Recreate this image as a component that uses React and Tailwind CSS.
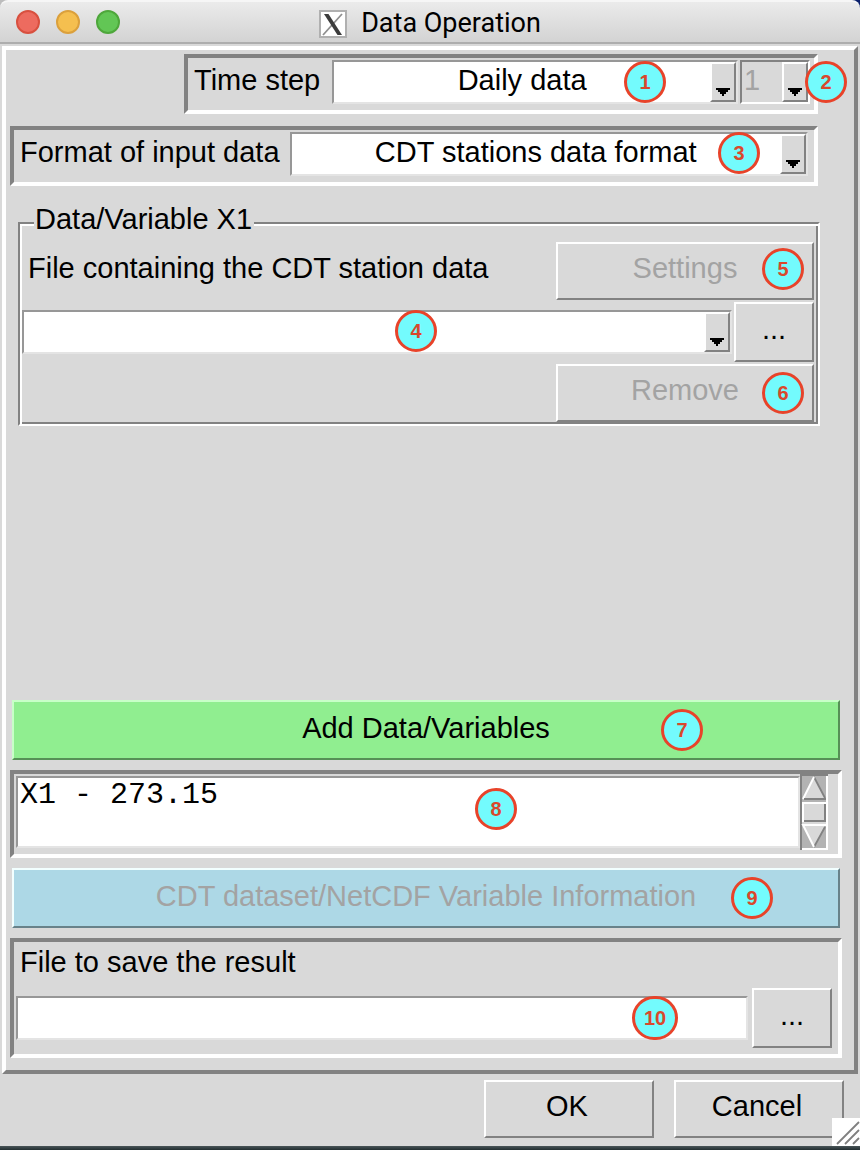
import React from "react";

const SUNKEN =
  "border-4 border-t-[#828282] border-l-[#828282] border-r-white border-b-white";
const FIELD =
  "border-2 border-t-[#979797] border-l-[#979797] border-r-[#e4e4e4] border-b-[#e4e4e4]";
const RAISED =
  "border-2 border-t-white border-l-white border-r-[#828282] border-b-[#828282]";

function Badge({ n, className }) {
  return (
    <span
      className={`pointer-events-none absolute z-10 flex items-center justify-center rounded-full border-[3px] border-[#e8432a] bg-[#73fbfd] text-xl font-bold text-[#d9482c] ${
        n > 9 ? "h-11 w-[46px]" : "size-[42px]"
      } ${className}`}
    >
      {n}
    </span>
  );
}

function Combo({ id, label, options, disabled, className, align }) {
  return (
    <div
      className={`relative flex h-11 ${className} ${
        disabled
          ? "border-2 border-t-[#828282] border-l-[#828282] border-r-white border-b-white"
          : FIELD
      }`}
    >
      <select
        id={id}
        aria-label={label}
        disabled={disabled}
        className={`min-w-0 flex-1 appearance-none pb-1 opacity-100 outline-none ${align} ${
          disabled ? "bg-[#d9d9d9] text-[#a3a3a3]" : "bg-white text-black"
        }`}
      >
        {options.map((o) => (
          <option key={o}>{o}</option>
        ))}
      </select>
      <span
        aria-hidden="true"
        className={`flex w-[26px] items-end justify-center bg-[#d9d9d9] pb-1 ${RAISED}`}
      >
        <svg width="14" height="8" viewBox="0 0 14 8" shapeRendering="crispEdges" className="shrink-0">
          <path d="M0 0H14V2H12V4H10V6H8V8H6V6H4V4H2V2H0Z" />
        </svg>
      </span>
    </div>
  );
}

function Button({ children, className, ...rest }) {
  return (
    <button type="button" className={`text-center ${className}`} {...rest}>
      {children}
    </button>
  );
}

function XLogo() {
  return (
    <svg width="28" height="28" viewBox="0 0 28 28" aria-hidden="true" className="mt-1">
      <rect x="1" y="1" width="26" height="26" fill="#fff" stroke="#b0b0b0" strokeWidth="2" />
      <path d="M23 4L4 25" stroke="#8f8f8f" strokeWidth="1.8" />
      <path d="M5 4H9.5L23 25H18.5Z" fill="#3c3c3c" />
    </svg>
  );
}

function Scrollbar() {
  return (
    <svg width="28" height="76" viewBox="0 0 28 76" aria-hidden="true" className="shrink-0">
      <rect width="28" height="76" fill="#fff" />
      <path d="M0 0H28V2H2V76H0Z" fill="#828282" />
      <rect x="2" y="2" width="24" height="72" fill="#b3b3b3" />
      <path d="M14 3L3 25H25Z" fill="#d9d9d9" />
      <path d="M14 3L25 24" stroke="#828282" strokeWidth="1.8" />
      <path d="M14 3L3 25" stroke="#fff" strokeWidth="2" />
      <path d="M4 25H26" stroke="#828282" strokeWidth="2" />
      <rect x="2" y="28" width="24" height="22" fill="#d9d9d9" />
      <path d="M3 48V29H26" stroke="#fff" strokeWidth="2" fill="none" />
      <path d="M4 47H25V30" stroke="#828282" strokeWidth="2" fill="none" />
      <path d="M3 51H25L14 73Z" fill="#d9d9d9" />
      <path d="M25 53L14 73" stroke="#828282" strokeWidth="1.8" />
      <path d="M26 51H3L14 73" stroke="#fff" strokeWidth="2" fill="none" />
    </svg>
  );
}

export default function App() {
  return (
    <div className="flex min-h-screen flex-col bg-linear-to-r from-[#bdbdbd] to-[#0a1f6b] font-['Liberation_Sans',Arial,sans-serif] text-[29px] leading-8 text-black">
      <header className="relative flex h-11 items-center justify-center gap-3.5 rounded-t-lg border-t-2 border-b-2 border-t-[#f6f6f6] border-b-[#adadad] bg-linear-to-b from-[#ebebeb] to-[#d3d3d3]">
        <div className="absolute left-4 flex gap-4">
          <button type="button" aria-label="Close" className="size-6 rounded-full border-2 border-[#d8503f] bg-[#ed6b5f]" />
          <button type="button" aria-label="Minimize" className="size-6 rounded-full border-2 border-[#dba03c] bg-[#f5bf4f]" />
          <button type="button" aria-label="Zoom" className="size-6 rounded-full border-2 border-[#4ea73b] bg-[#62c655]" />
        </div>
        <XLogo />
        <h1 className="pt-0.5 font-[family-name:Roboto,sans-serif] text-[27px] font-normal">Data Operation</h1>
      </header>

      <div className="flex flex-1 flex-col bg-[#d9d9d9] pt-0.5">
        <main className="mx-0.5 flex flex-1 flex-col border-4 border-t-white border-r-[#828282] border-b-[#828282] border-l-white pt-1 pr-3 pb-3 pl-1">
          <section className="flex-1 pb-4">
            <div className={`relative mr-6 ml-[174px] flex h-[60px] gap-0.5 pt-0.5 pr-1 pl-1.5 ${SUNKEN}`}>
              <label htmlFor="step" className="h-10 pr-2.5 leading-10">Time step</label>
              <Combo id="step" options={["Daily data"]} className="min-w-0 flex-1" align="[text-align-last:center]" />
              <Combo label="Minutes or hours" options={["1"]} disabled className="w-[70px]" align="pl-0.5" />
              <Badge n={1} className="top-[3px] right-[148px]" />
              <Badge n={2} className="top-[3px] -right-[33px]" />
            </div>

            <div className={`relative mt-3 mr-6 flex h-[60px] gap-2.5 pt-0.5 pr-1.5 pl-1.5 ${SUNKEN}`}>
              <label htmlFor="format" className="h-10 leading-10">Format of input data</label>
              <Combo id="format" options={["CDT stations data format"]} className="min-w-0 flex-1" align="[text-align-last:center]" />
              <Badge n={3} className="top-0.5 right-[54px]" />
            </div>

            <fieldset className="mt-[21px] mr-[22px] ml-2 min-w-0 border-2 border-t-[#828282] border-r-white border-b-white border-l-[#828282] pt-[3px] pr-1 pb-0.5 pl-0.5 shadow-[inset_2px_2px_0_#fff,inset_-2px_-2px_0_#828282]">
              <legend className="ml-3 bg-[#d9d9d9] pr-0.5 pl-px pb-2 leading-6">Data/Variable X1</legend>
              <div className="relative flex justify-between">
                <label htmlFor="station" className="pt-2.5 pl-1.5">File containing the CDT station data</label>
                <Button disabled className={`h-[58px] w-[258px] pb-1.5 text-[#a3a3a3] ${RAISED}`}>Settings</Button>
                <Badge n={5} className="top-1.5 right-2.5" />
              </div>
              <div className="relative mt-0.5 flex items-center gap-0.5">
                <Combo id="station" options={[""]} className="min-w-0 flex-1" align="" />
                <Button aria-label="Browse station file" className={`h-[60px] w-20 pb-1.5 ${RAISED}`}>...</Button>
                <Badge n={4} className="top-2 right-[377px]" />
              </div>
              <div className="relative mt-0.5 flex justify-end">
                <Button disabled className={`h-[58px] w-[258px] pb-1.5 text-[#a3a3a3] ${RAISED}`}>Remove</Button>
                <Badge n={6} className="top-2 right-2.5" />
              </div>
            </fieldset>
          </section>

          <div className="flex flex-col gap-2.5">
            <div className="relative mx-0.5 flex">
              <Button className="h-[60px] flex-1 border-2 border-t-[#c8ffc8] border-r-[#569056] border-b-[#569056] border-l-[#c8ffc8] bg-[#90ee90] pb-1">
                Add Data/Variables
              </Button>
              <Badge n={7} className="top-[9px] right-[137px]" />
            </div>

            <div className={`relative flex h-[88px] pr-2.5 pl-0.5 ${SUNKEN}`}>
              <textarea
                aria-label="Formula"
                defaultValue="X1 - 273.15"
                className={`mt-0.5 h-[72px] min-w-0 flex-1 resize-none bg-white pl-0.5 font-['Liberation_Mono',monospace] text-3xl leading-[34px] outline-none ${FIELD}`}
              />
              <Scrollbar />
              <Badge n={8} className="top-3.5 right-[321px]" />
            </div>

            <div className="relative mx-0.5 flex">
              <Button disabled className="h-[60px] flex-1 border-2 border-t-[#f2ffff] border-r-[#68828a] border-b-[#68828a] border-l-[#f2ffff] bg-[#add8e6] pb-1 text-[#a3a3a3]">
                CDT dataset/NetCDF Variable Information
              </Button>
              <Badge n={9} className="top-[9px] right-[67px]" />
            </div>

            <div className={`pr-1.5 pb-1.5 pl-0.5 ${SUNKEN}`}>
              <label htmlFor="result" className="block pl-1 leading-10">File to save the result</label>
              <div className="relative mt-1.5 flex items-center gap-1">
                <input id="result" type="text" className={`h-11 min-w-0 flex-1 bg-white px-1 outline-none ${FIELD}`} />
                <Button aria-label="Browse result file" className={`h-[60px] w-20 pb-1.5 ${RAISED}`}>...</Button>
                <Badge n={10} className="top-2 right-[154px]" />
              </div>
            </div>
          </div>
        </main>

        <footer className="relative flex justify-end gap-5 pt-1.5 pr-4 pb-2">
          <Button className={`h-[58px] w-[170px] pr-1 pb-1.5 ${RAISED}`}>OK</Button>
          <Button className={`h-[58px] w-[170px] pr-1 pb-1.5 ${RAISED}`}>Cancel</Button>
          <svg width="28" height="28" viewBox="0 0 28 28" aria-hidden="true" className="absolute right-0 bottom-0">
            <rect width="28" height="28" fill="#fff" />
            <path d="M5 26L27 4M13 26L27 12M21 26L27 20" stroke="#808080" strokeWidth="1.8" />
          </svg>
        </footer>
      </div>
      <div className="h-1 bg-linear-to-b from-[#4a5558] to-[#222e31]" />
    </div>
  );
}
